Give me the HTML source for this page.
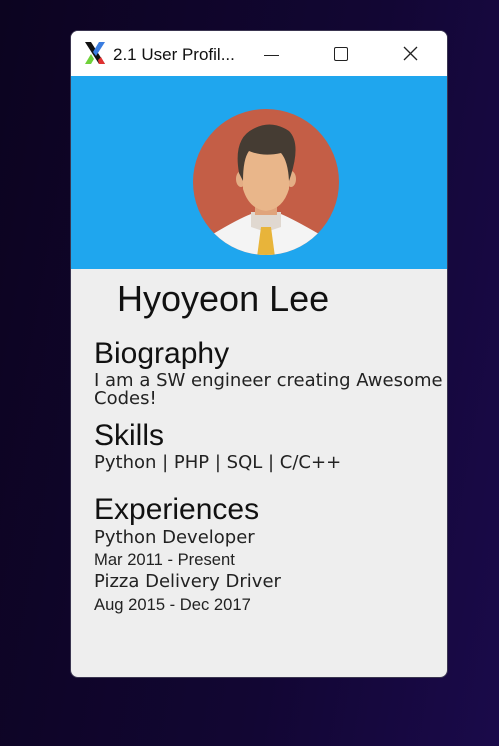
<!DOCTYPE html>
<html><head><style>
body{margin:0;width:499px;height:746px;overflow:hidden;background:linear-gradient(100deg,#0c0420 0%,#120633 60%,#1a0a4a 100%);position:relative;font-family:"Liberation Sans",sans-serif}
.win{position:absolute;left:70px;top:30px;width:376px;height:646px;background:#eeeeee;border:1px solid #3a3550;border-radius:8px;overflow:hidden}
.title{position:absolute;left:0;top:0;width:376px;height:45px;background:#fff}
.banner{position:absolute;left:0;top:45px;width:376px;height:193px;background:#1fa6ee}
.t{position:absolute;white-space:nowrap;color:#111;line-height:1}
.d{font-family:"DejaVu Sans",sans-serif;color:#222}
</style></head><body>
<div class="win">
 <div class="title">
  <svg style="position:absolute;left:12px;top:10px" width="24" height="24" viewBox="0 0 24 24">
   <path d="M2 1 L8 1 L22 23 L16 23Z" fill="#111"/>
   <path d="M16 1 L22 1 L13 15 L10 11Z" fill="#3a7de0"/>
   <path d="M2 23 L8 23 L11 18 L8 13Z" fill="#6fd13a"/>
   <path d="M16 23 L22 23 L18 16 L15 19Z" fill="#e03030"/>
  </svg>
  <div class="t" style="left:42px;top:15px;font-size:17px;color:#111">2.1 User Profil...</div>
  <div style="position:absolute;left:193px;top:24px;width:15px;height:1px;background:#222"></div>
  <div style="position:absolute;left:263px;top:16px;width:12px;height:12px;border:1.3px solid #222;border-radius:2px"></div>
  <svg style="position:absolute;left:332px;top:15px" width="15" height="15"><path d="M1 1L14 14M14 1L1 14" stroke="#222" stroke-width="1.3"/></svg>
 </div>
 <div class="banner">
  <svg style="position:absolute;left:122px;top:33px" width="146" height="146" viewBox="0 0 146 146">
   <defs><clipPath id="c"><circle cx="73" cy="73" r="73"/></clipPath></defs>
   <circle cx="73" cy="73" r="73" fill="#c45e46"/>
   <g clip-path="url(#c)">
    <path d="M20 125 Q45 110 58 105 L88 105 Q100 110 126 125 L130 150 L16 150Z" fill="#f4f4f4"/>
    <path d="M58 103 L88 103 L88 118 L73 123 L58 118Z" fill="#e0d8d0"/>
    <path d="M68 118 L78 118 L82 148 L64 148Z" fill="#e8b43a"/>
    <ellipse cx="48" cy="70" rx="5" ry="8" fill="#e4ae85"/>
    <ellipse cx="98" cy="70" rx="5" ry="8" fill="#e4ae85"/>
    <rect x="62" y="88" width="22" height="18" fill="#e0a47c"/>
    <path d="M50 50 Q50 32 73 32 Q96 32 96 50 L96 80 Q90 100 73 102 Q56 100 50 80Z" fill="#e9b68a"/>
    <path d="M46 64 Q40 30 60 20 Q78 10 96 22 Q108 34 98 66 L96 72 Q95 52 88 44 Q70 48 56 42 Q50 50 50 72Z" fill="#453c33"/>
   </g>
  </svg>
 </div>
 <div class="t" style="left:46px;top:250px;font-size:36px">Hyoyeon Lee</div>
 <div class="t" style="left:23px;top:308px;font-size:30px">Biography</div>
 <div class="t d" style="left:23px;top:341px;font-size:18px">I am a SW engineer creating Awesome</div>
 <div class="t d" style="left:23px;top:359px;font-size:18px">Codes!</div>
 <div class="t" style="left:23px;top:390px;font-size:30px">Skills</div>
 <div class="t d" style="left:23px;top:423px;font-size:18px">Python | PHP | SQL | C/C++</div>
 <div class="t" style="left:23px;top:464px;font-size:30px">Experiences</div>
 <div class="t d" style="left:23px;top:498px;font-size:18px">Python Developer</div>
 <div class="t" style="left:23px;top:521px;font-size:16.6px;color:#222">Mar 2011 - Present</div>
 <div class="t d" style="left:23px;top:542px;font-size:18px">Pizza Delivery Driver</div>
 <div class="t" style="left:23px;top:566px;font-size:16.6px;color:#222">Aug 2015 - Dec 2017</div>
</div>
</body></html>
